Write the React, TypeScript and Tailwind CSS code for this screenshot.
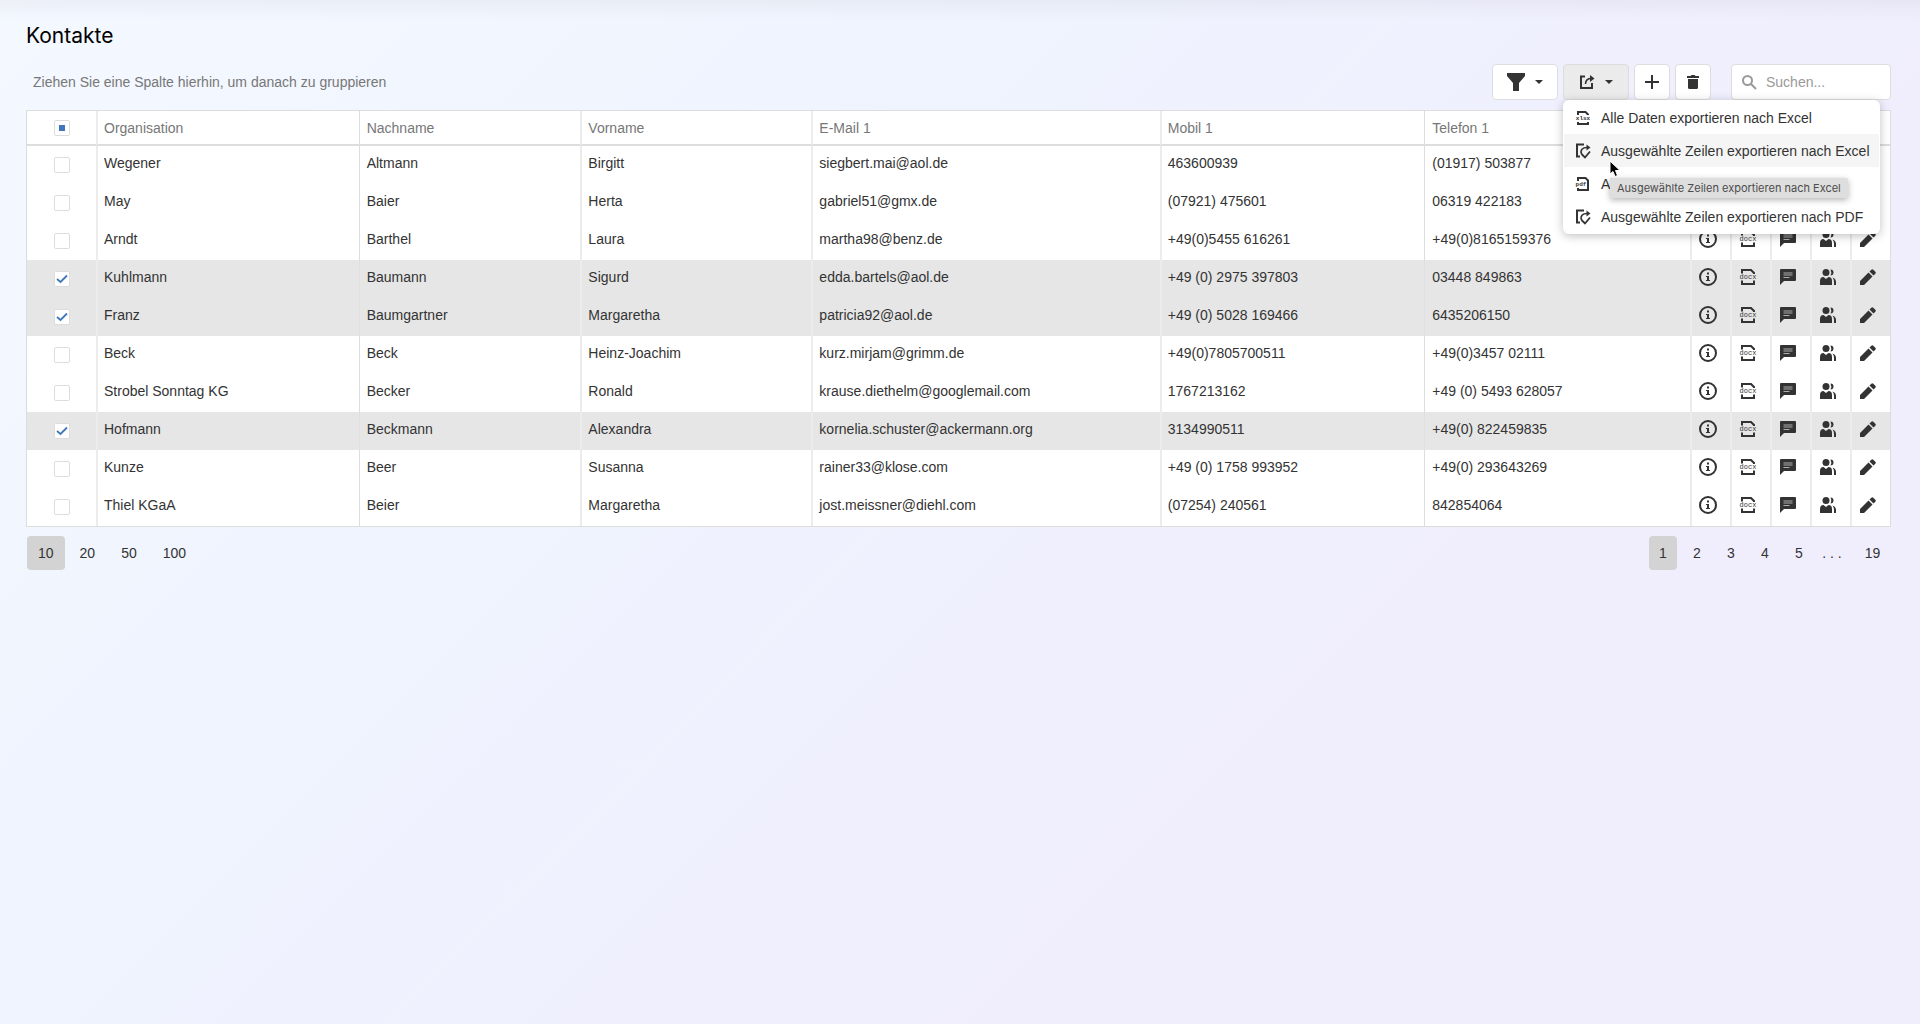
import { ReactNode, useState } from "react";

type Contact = {
  org: string;
  last: string;
  first: string;
  mail: string;
  mobile: string;
  phone: string;
};

const CONTACTS: Contact[] = [
  { org: "Wegener", last: "Altmann", first: "Birgitt", mail: "siegbert.mai@aol.de", mobile: "463600939", phone: "(01917) 503877" },
  { org: "May", last: "Baier", first: "Herta", mail: "gabriel51@gmx.de", mobile: "(07921) 475601", phone: "06319 422183" },
  { org: "Arndt", last: "Barthel", first: "Laura", mail: "martha98@benz.de", mobile: "+49(0)5455 616261", phone: "+49(0)8165159376" },
  { org: "Kuhlmann", last: "Baumann", first: "Sigurd", mail: "edda.bartels@aol.de", mobile: "+49 (0) 2975 397803", phone: "03448 849863" },
  { org: "Franz", last: "Baumgartner", first: "Margaretha", mail: "patricia92@aol.de", mobile: "+49 (0) 5028 169466", phone: "6435206150" },
  { org: "Beck", last: "Beck", first: "Heinz-Joachim", mail: "kurz.mirjam@grimm.de", mobile: "+49(0)7805700511", phone: "+49(0)3457 02111" },
  { org: "Strobel Sonntag KG", last: "Becker", first: "Ronald", mail: "krause.diethelm@googlemail.com", mobile: "1767213162", phone: "+49 (0) 5493 628057" },
  { org: "Hofmann", last: "Beckmann", first: "Alexandra", mail: "kornelia.schuster@ackermann.org", mobile: "3134990511", phone: "+49(0) 822459835" },
  { org: "Kunze", last: "Beer", first: "Susanna", mail: "rainer33@klose.com", mobile: "+49 (0) 1758 993952", phone: "+49(0) 293643269" },
  { org: "Thiel KGaA", last: "Beier", first: "Margaretha", mail: "jost.meissner@diehl.com", mobile: "(07254) 240561", phone: "842854064" },
];

const WIDE = "border-l-2 border-[#ececec] pl-1.5";
const THIN = "border-l border-[#dddddd] pl-[7px]";

const COLUMNS: { key: keyof Contact; title: string; line: string; width: string }[] = [
  { key: "org", title: "Organisation", line: WIDE, width: "w-[14.1%]" },
  { key: "last", title: "Nachname", line: THIN, width: "w-[11.9%]" },
  { key: "first", title: "Vorname", line: WIDE, width: "w-[12.4%]" },
  { key: "mail", title: "E-Mail 1", line: WIDE, width: "w-[18.7%]" },
  { key: "mobile", title: "Mobil 1", line: WIDE, width: "w-[14.2%]" },
  { key: "phone", title: "Telefon 1", line: THIN, width: "" },
];

function Caret() {
  return (
    <svg width="8" height="4" viewBox="0 0 8 4" fill="currentColor" aria-hidden="true">
      <path d="M0 0h8L4 4z" />
    </svg>
  );
}

function FilterIcon() {
  return (
    <svg width="18" height="18" viewBox="0 0 18 18" fill="currentColor" aria-hidden="true">
      <path d="M0 0h18v3l-6 7v8H6v-8L0 3z" />
    </svg>
  );
}

function ExportIcon() {
  return (
    <svg width="16" height="16" viewBox="0 0 16 16" fill="none" stroke="currentColor" aria-hidden="true">
      <path d="M6 2.500H2V14h11V9" strokeWidth="2" />
      <path d="M6.500 10c0-4 2-5.500 6-5.500" strokeWidth="1.600" />
      <path d="M11 1l4.500 3.500L11 8z" fill="currentColor" stroke="none" />
    </svg>
  );
}

function ExportSelectedIcon() {
  return (
    <svg width="16" height="16" viewBox="0 0 16 16" fill="none" stroke="currentColor" aria-hidden="true">
      <path d="M9 1.500H2v12h3" strokeWidth="2" />
      <path d="M6.500 11C5 7 7.500 4.500 12 4.500" strokeWidth="1.600" />
      <path d="M11.500 1.500l4 3-4 3z" fill="currentColor" stroke="none" />
      <path d="M6.500 11l3.500 3.500 5-6" strokeWidth="1.800" />
    </svg>
  );
}

function DocxIcon() {
  return (
    <svg width="18" height="18" viewBox="0 0 18 18" aria-hidden="true">
      <path d="M3 5.500V2h9l3 3v1M3 12.500V16h12v-3.500" fill="none" stroke="currentColor" strokeWidth="2" />
      <text x="9" y="11" textAnchor="middle" fill="currentColor" className="font-['Liberation_Mono',monospace] text-[7px]">
        docx
      </text>
    </svg>
  );
}

function XlsxIcon() {
  return (
    <svg width="16" height="16" viewBox="0 0 16 16" aria-hidden="true">
      <path d="M3 5V2h7.500L13 4.500V5M3 12v2h10v-2" fill="none" stroke="currentColor" strokeWidth="2" />
      <text x="8" y="10" textAnchor="middle" fill="currentColor" className="font-['Liberation_Mono',monospace] text-[6px] font-bold">
        xlsx
      </text>
    </svg>
  );
}

function PdfIcon() {
  return (
    <svg width="16" height="16" viewBox="0 0 16 16" aria-hidden="true">
      <path d="M3 5V2h7.500L13 4.500V14H3v-2" fill="none" stroke="currentColor" strokeWidth="2" />
      <text x="6" y="10" textAnchor="middle" fill="currentColor" className="font-['Liberation_Mono',monospace] text-[6px] font-bold">
        pdf
      </text>
    </svg>
  );
}

function InfoIcon() {
  return (
    <svg width="18" height="18" viewBox="0 0 18 18" fill="currentColor" aria-hidden="true">
      <circle cx="9" cy="9" r="8" fill="none" stroke="currentColor" strokeWidth="2" />
      <path d="M8 4.500h2v2H8zM7 8h3v4h1v1H7v-1h1V9H7z" />
    </svg>
  );
}

function CommentIcon() {
  return (
    <svg width="16" height="16" viewBox="0 0 16 16" aria-hidden="true">
      <path d="M1 0h14q1 0 1 1v10q0 1-1 1H4l-4 4V1q0-1 1-1z" fill="currentColor" />
      <path d="M3.500 4h9M3.500 6h9M3.500 8.500h6" stroke="#bbbbbb" strokeWidth="0.900" />
    </svg>
  );
}

function GroupIcon() {
  return (
    <svg width="16" height="16" viewBox="0 0 16 16" fill="currentColor" aria-hidden="true">
      <circle cx="6" cy="3.500" r="3.500" />
      <path d="M0 16v-4q0-4 3.500-4L6 10l2.500-2q3.500 0 3.500 4v4z" />
      <path d="M10.500 0.500q3 0 3 3t-3 3q1.500-3 0-6zM12.500 8.500q3.500 1 3.500 4.500v3h-2v-3q0-3-1.500-4.500z" />
    </svg>
  );
}

function PencilIcon() {
  return (
    <svg width="16" height="16" viewBox="0 0 16 16" fill="currentColor" aria-hidden="true">
      <path d="M0 16v-4l8.500-8.500 4 4L4 16zM9.500 2.500l1.800-1.800q1-1 2 0l2 2q1 1 0 2l-1.800 1.800z" />
    </svg>
  );
}

const ROW_ACTIONS = [
  { name: "Details", icon: <InfoIcon /> },
  { name: "Als DOCX exportieren", icon: <DocxIcon /> },
  { name: "Kommentar", icon: <CommentIcon /> },
  { name: "Personen", icon: <GroupIcon /> },
  { name: "Bearbeiten", icon: <PencilIcon /> },
];

const EXPORT_ITEMS = [
  { text: "Alle Daten exportieren nach Excel", icon: <XlsxIcon />, hover: false },
  { text: "Ausgewählte Zeilen exportieren nach Excel", icon: <ExportSelectedIcon />, hover: true },
  { text: "Alle Daten exportieren nach PDF", icon: <PdfIcon />, hover: false },
  { text: "Ausgewählte Zeilen exportieren nach PDF", icon: <ExportSelectedIcon />, hover: false },
];

function Check({ label, checked, mixed, onChange }: { label: string; checked: boolean; mixed?: boolean; onChange: () => void }) {
  return (
    <label className="mx-auto grid size-4 place-items-center">
      <input
        type="checkbox"
        aria-label={label}
        checked={checked}
        onChange={onChange}
        className="col-start-1 row-start-1 size-4 appearance-none rounded-xs border border-[#dddddd] bg-white"
      />
      {mixed && <span className="z-10 col-start-1 row-start-1 size-1.5 bg-[#3f78b8]" />}
      {checked && !mixed && (
        <svg className="z-10 col-start-1 row-start-1" width="12" height="10" viewBox="0 0 12 10" fill="none" aria-hidden="true">
          <path d="M1 5l3.500 3L11 1.500" stroke="#3f78b8" strokeWidth="1.800" />
        </svg>
      )}
    </label>
  );
}

function ToolButton({ label, className, children }: { label: string; className: string; children: ReactNode }) {
  return (
    <button
      type="button"
      aria-label={label}
      className={`flex h-9 items-center justify-center rounded border border-[#dddddd] ${className}`}
    >
      {children}
    </button>
  );
}

function ExportMenu() {
  return (
    <div className="absolute top-full left-0 z-20 w-[317px] rounded-md bg-white px-px py-px shadow-[0_2px_10px_rgba(0,0,0,0.25)]">
      <ul>
        {EXPORT_ITEMS.map(item => (
          <li key={item.text}>
            <button
              type="button"
              className={`flex h-[33px] w-full items-center gap-[9px] pl-2.5 text-left whitespace-nowrap ${item.hover ? "bg-[#f5f5f5]" : ""}`}
            >
              <span className="flex w-[18px] justify-center">{item.icon}</span>
              {item.text}
            </button>
          </li>
        ))}
      </ul>
      <div
        role="tooltip"
        className="absolute top-[78px] left-[47px] flex h-5 items-center rounded-xs bg-[#dedede] px-[7px] font-['Inter','Liberation_Sans',sans-serif] text-[11px] whitespace-nowrap text-[#4c4c4c] shadow-[0_2px_6px_rgba(0,0,0,0.3)]"
      >
        Ausgewählte Zeilen exportieren nach Excel
      </div>
      <svg className="absolute top-[60px] left-[46px]" width="12" height="18" viewBox="0 0 12 18" aria-hidden="true">
        <path d="M1 1v13l3-2.500 2 5 2.500-1-2-5H11z" fill="#000" stroke="#fff" strokeWidth="1" />
      </svg>
    </div>
  );
}

function Toolbar() {
  return (
    <div className="mt-3 flex h-9 items-center">
      <p className="mr-auto pl-[7px] text-[#777777]">Ziehen Sie eine Spalte hierhin, um danach zu gruppieren</p>
      <div className="flex gap-[5px]">
        <ToolButton label="Filter" className="w-[66px] gap-2.5 bg-white">
          <FilterIcon />
          <Caret />
        </ToolButton>
        <div className="relative">
          <ToolButton label="Exportieren" className="w-[66px] gap-2.5 bg-[#ebebeb]">
            <ExportIcon />
            <Caret />
          </ToolButton>
          <ExportMenu />
        </div>
        <ToolButton label="Hinzufügen" className="w-9 bg-white">
          <svg width="14" height="14" viewBox="0 0 14 14" stroke="currentColor" strokeWidth="2" aria-hidden="true">
            <path d="M7 0v14M0 7h14" />
          </svg>
        </ToolButton>
        <ToolButton label="Löschen" className="w-9 bg-white">
          <svg width="12" height="14" viewBox="0 0 12 14" fill="currentColor" aria-hidden="true">
            <path d="M0 1h3.500l1-1h3l1 1H12v2H0zM1 4h10v8.500q0 1.500-1.500 1.500h-7Q1 14 1 12.500z" />
          </svg>
        </ToolButton>
      </div>
      <label className="ml-5 flex h-9 w-40 items-center gap-[9px] rounded border border-[#dddddd] bg-white pl-2.5">
        <svg className="shrink-0" width="15" height="15" viewBox="0 0 15 15" fill="none" stroke="#999999" strokeWidth="2" aria-hidden="true">
          <circle cx="5.500" cy="5.500" r="4.500" />
          <path d="M9 9l5 5" />
        </svg>
        <input
          type="text"
          aria-label="Suchen"
          placeholder="Suchen..."
          className="w-full min-w-0 bg-transparent outline-none placeholder:text-[#999999]"
        />
      </label>
    </div>
  );
}

function Pager() {
  const button = "flex h-[34px] items-center justify-center rounded";
  return (
    <div className="mt-[9px] flex justify-between px-px">
      <div className="flex gap-1">
        {["10", "20", "50", "100"].map(size => (
          <button key={size} type="button" className={`${button} px-[11px] ${size === "10" ? "bg-[#d3d3d3]" : ""}`}>
            {size}
          </button>
        ))}
      </div>
      <div className="flex gap-1.5">
        {["1", "2", "3", "4", "5"].map(page => (
          <button key={page} type="button" className={`${button} w-7 ${page === "1" ? "bg-[#d3d3d3]" : ""}`}>
            {page}
          </button>
        ))}
        <span className="mr-1 flex w-[26px] items-center justify-center">. . .</span>
        <button type="button" className={`${button} w-[35px]`}>
          19
        </button>
      </div>
    </div>
  );
}

export default function App() {
  const [selected, setSelected] = useState([3, 4, 7]);

  const toggle = (i: number) =>
    setSelected(s => (s.includes(i) ? s.filter(n => n !== i) : [...s, i]));
  const toggleAll = () =>
    setSelected(s => (s.length === CONTACTS.length ? [] : CONTACTS.map((_, i) => i)));

  return (
    <div className="min-h-screen bg-[linear-gradient(135deg,#f4f8ff_0%,#eff3fe_38%,#f0eefd_68%,#f0eefd_100%)] font-['Liberation_Sans',Arial,sans-serif] text-[14px] leading-5 text-[#333333]">
      <main className="bg-[linear-gradient(to_bottom,rgba(0,0,0,0.035),transparent_20px)] bg-no-repeat px-[29px] pt-5 pl-[26px]">
        <h1 className="pb-px font-['Inter','Liberation_Sans',sans-serif] text-[21px] leading-[31px] text-black">Kontakte</h1>
        <Toolbar />
        <table className="mt-2.5 w-full table-fixed border-separate border-spacing-0 border border-[#dddddd] bg-white">
          <thead>
            <tr className="h-[35px] text-left text-[#777777]">
              <th className="w-[69px] border-b-2 border-b-[#dddddd] p-0">
                <Check
                  label="Alle auswählen"
                  checked={selected.length === CONTACTS.length}
                  mixed={selected.length > 0 && selected.length < CONTACTS.length}
                  onChange={toggleAll}
                />
              </th>
              {COLUMNS.map(c => (
                <th key={c.key} className={`border-b-2 border-b-[#dddddd] py-0 pr-0 font-normal ${c.width} ${c.line}`}>
                  {c.title}
                </th>
              ))}
              {ROW_ACTIONS.map(a => (
                <th key={a.name} className="w-10 border-b-2 border-b-[#dddddd] p-0" />
              ))}
            </tr>
          </thead>
          <tbody>
            {CONTACTS.map((row, i) => {
              const on = selected.includes(i);
              return (
                <tr key={row.mail} className={`h-[38px] ${on ? "bg-[#e6e6e6]" : ""}`}>
                  <td className="p-0">
                    <Check label={`${row.org} auswählen`} checked={on} onChange={() => toggle(i)} />
                  </td>
                  {COLUMNS.map(c => (
                    <td key={c.key} className={`pt-0 pr-0 pb-1 whitespace-nowrap ${c.line} ${on ? "border-[#e0e0e0]" : ""}`}>
                      {row[c.key]}
                    </td>
                  ))}
                  {ROW_ACTIONS.map(a => (
                    <td key={a.name} className={`pt-0 pr-0 pb-1 ${WIDE} ${on ? "border-[#e0e0e0]" : ""}`}>
                      <button type="button" aria-label={a.name} className="flex size-5 items-center justify-center">
                        {a.icon}
                      </button>
                    </td>
                  ))}
                </tr>
              );
            })}
          </tbody>
        </table>
        <Pager />
      </main>
    </div>
  );
}
